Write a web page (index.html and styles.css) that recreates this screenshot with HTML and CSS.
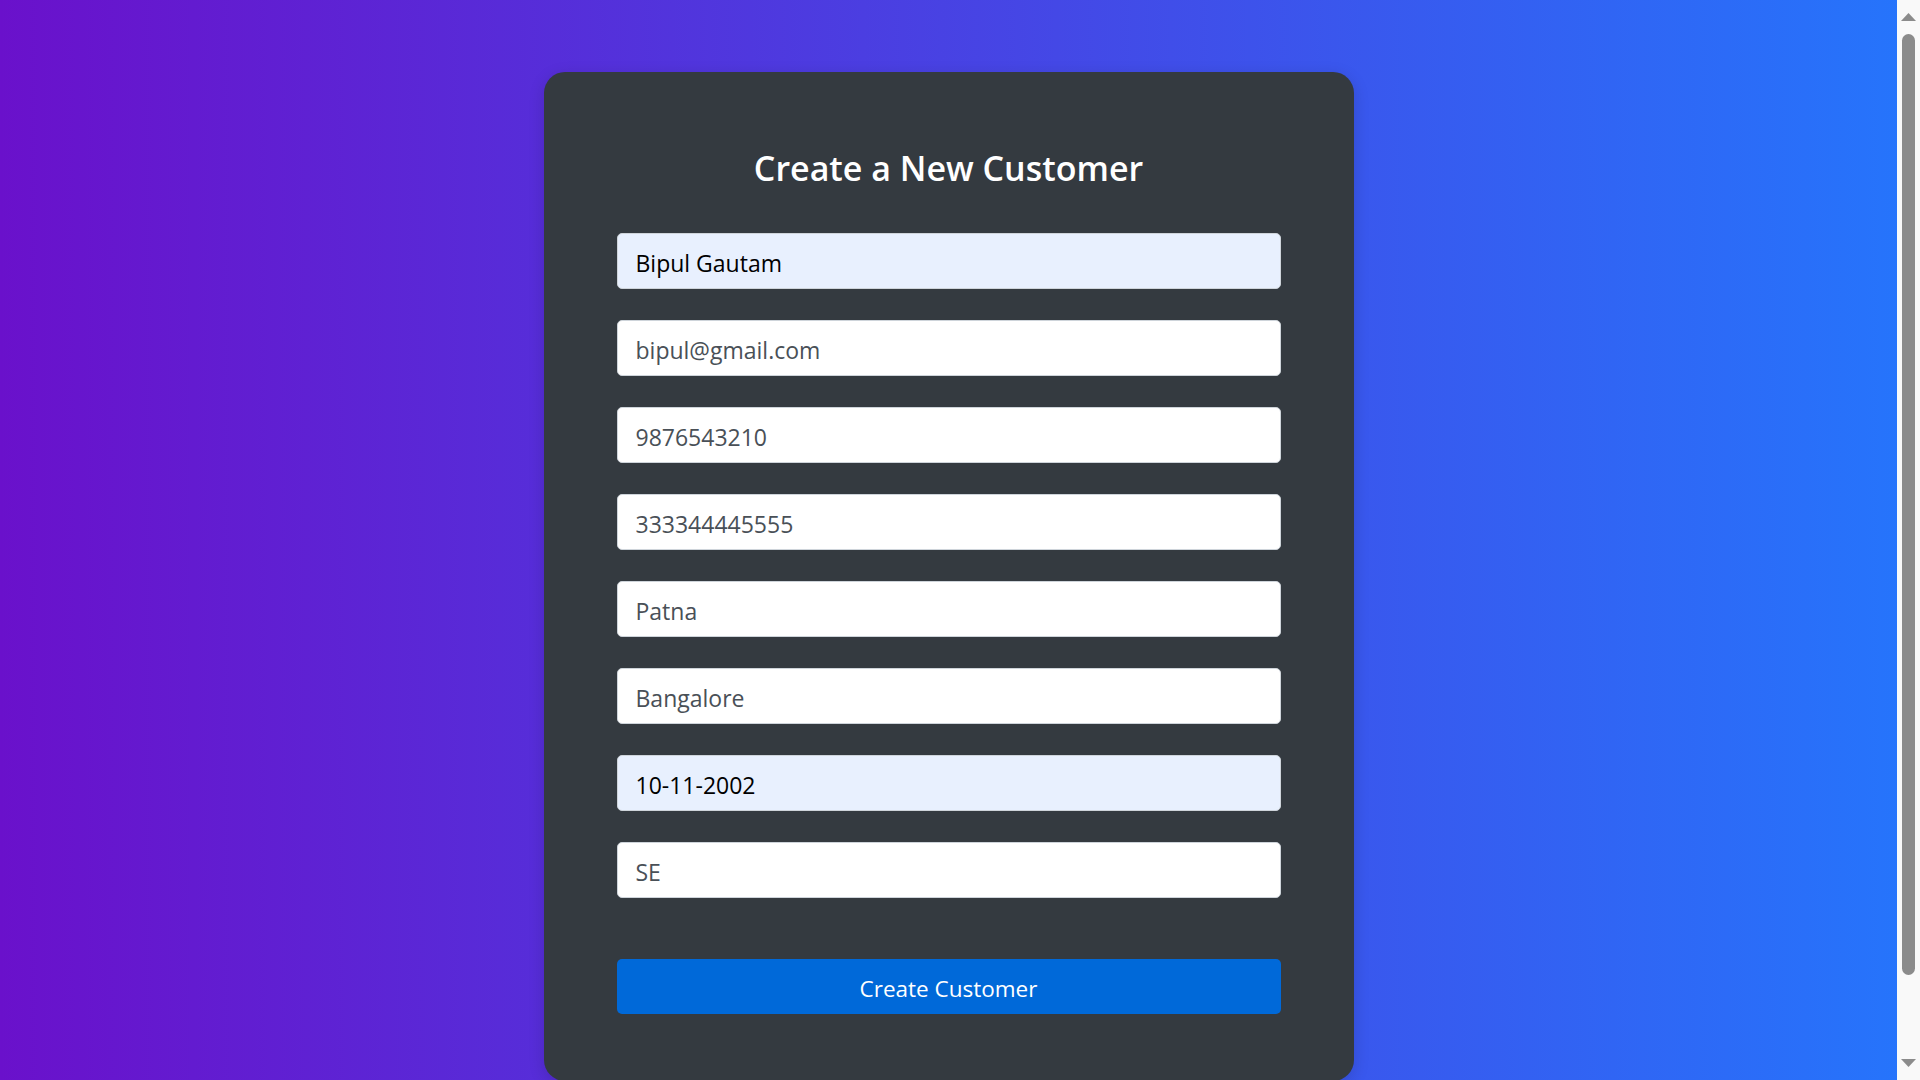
FILE: index.html
```html
<!DOCTYPE html>
<html lang="en">
<head>
<meta charset="utf-8">
<title>Create a New Customer</title>
<link rel="stylesheet" href="styles.css">
</head>
<body>
  <main class="page">
    <section class="card">
      <h2 class="card-title">Create a New Customer</h2>
      <form class="form">
        <input class="field field-filled" type="text" value="Bipul Gautam">
        <input class="field" type="text" value="bipul@gmail.com">
        <input class="field" type="text" value="9876543210">
        <input class="field" type="text" value="333344445555">
        <input class="field" type="text" value="Patna">
        <input class="field" type="text" value="Bangalore">
        <input class="field field-filled" type="text" value="10-11-2002">
        <input class="field" type="text" value="SE">
        <button class="submit" type="button">Create Customer</button>
      </form>
    </section>
  </main>
  <div class="scrollbar" aria-hidden="true">
    <div class="sb-btn">
      <svg width="15" height="8" viewBox="0 0 15 8"><polygon points="7.5,0 15,8 0,8" fill="#8b8b8b"/></svg>
    </div>
    <div class="sb-thumb"></div>
    <div class="sb-spacer"></div>
    <div class="sb-btn">
      <svg width="15" height="8" viewBox="0 0 15 8"><polygon points="0,0 15,0 7.5,8" fill="#8b8b8b"/></svg>
    </div>
  </div>
</body>
</html>
```

FILE: styles.css
```css
html, body {
  margin: 0;
  padding: 0;
}

body {
  font-family: "Open Sans", "Noto Sans", "Liberation Sans", sans-serif;
  background: linear-gradient(to right, #6a11cb 0%, #2575fc 100%);
  min-height: 100vh;
  padding-right: 23px;
}

.page {
  padding: 72px 0 118px;
  display: flex;
  justify-content: center;
}

.card {
  width: 810px;
  box-sizing: border-box;
  background: #343a40;
  border-radius: 21px;
  padding: 76px 73px 67px;
  box-shadow: 0 4px 16px rgba(0, 0, 0, 0.15);
}

.card-title {
  margin: 0 0 44px;
  color: #ffffff;
  text-align: center;
  font-size: 34px;
  font-weight: 600;
  line-height: 1.2;
}

.form {
  display: flex;
  flex-direction: column;
}

.field {
  box-sizing: border-box;
  width: 100%;
  height: 56px;
  margin: 0 0 31px;
  padding: 4px 18px 0;
  border: 1px solid #ced4da;
  border-radius: 5px;
  background: #ffffff;
  color: #495057;
  font-family: inherit;
  font-size: 23px;
  outline: none;
}

.field-filled {
  background: #e8f0fe;
  color: #000000;
}

.submit {
  margin-top: 30px;
  height: 55px;
  padding: 4px 0 0;
  border: none;
  border-radius: 5px;
  background: #0069d9;
  color: #ffffff;
  font-family: inherit;
  font-size: 22.5px;
  cursor: pointer;
}

/* classic browser scrollbar, drawn over the right edge */
.scrollbar {
  position: fixed;
  top: 0;
  right: 0;
  width: 23px;
  height: 100vh;
  background: #f9f9f9;
  display: flex;
  flex-direction: column;
  align-items: center;
}

.sb-btn {
  height: 34px;
  width: 100%;
  display: flex;
  align-items: center;
  justify-content: center;
  flex: none;
}

.sb-thumb {
  width: 13px;
  height: 941px;
  border-radius: 7px;
  background: #8b8b8b;
  flex: none;
}

.sb-spacer {
  flex: 1;
}
```
